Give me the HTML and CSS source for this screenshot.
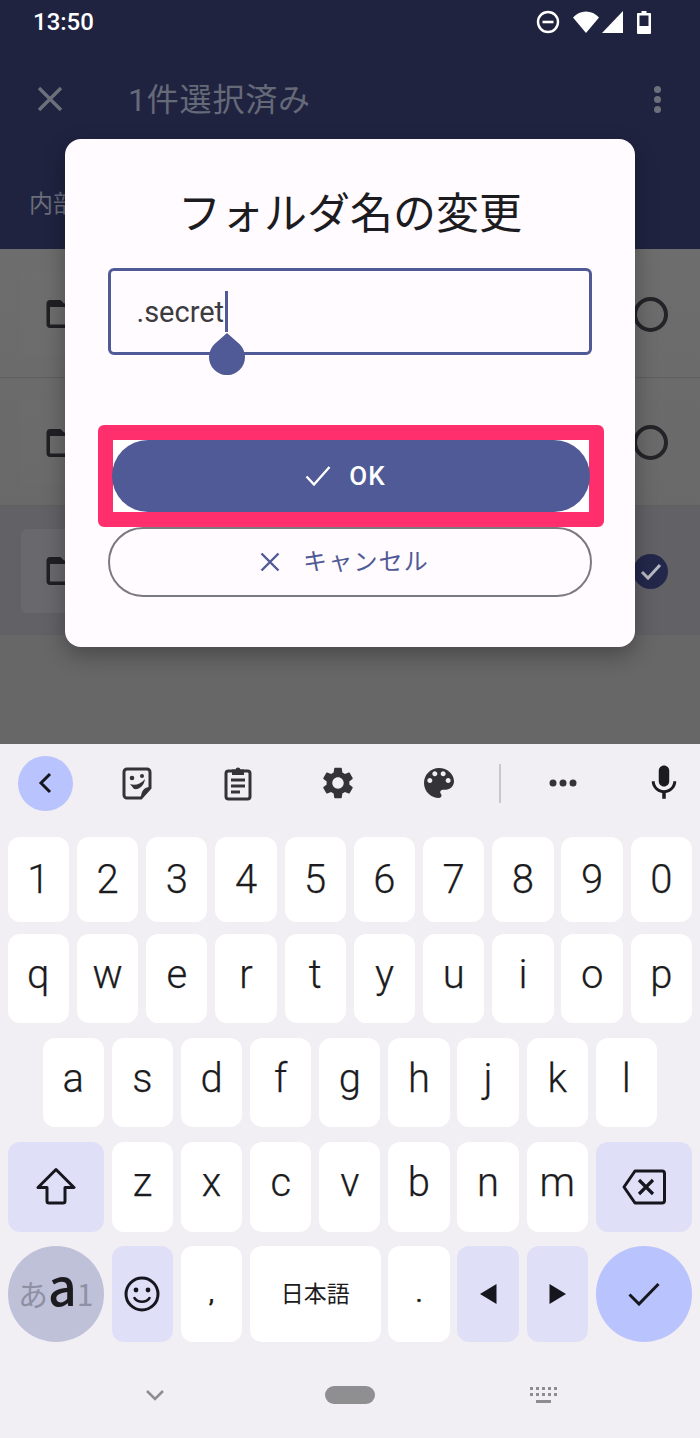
FILE: index.html
```html
<!DOCTYPE html>
<html lang="ja">
<head>
    <meta charset="UTF-8">
    <meta name="viewport" content="width=device-width, initial-scale=1.0">
    <title>フォルダ名の変更</title>
    <link rel="stylesheet" href="styles.css">
</head>
<body>
    <div class="screen">
        <div class="app">
            <header class="top">
                <div class="status">
                    <span class="time">13:50</span>
                    <div class="status-icons">
                        <svg width="24" height="24" viewBox="0 0 24 24"><circle cx="12" cy="12" r="10" fill="none" stroke="#fff" stroke-width="2.4"/><rect x="6.5" y="10.7" width="11" height="2.6" fill="#fff"/></svg>
                        <svg class="ic-wifi" width="26" height="22" viewBox="0 0 26 22"><path d="M0 6.5C3.5 2.5 8 .5 13 .5s9.500 2 13 6L13 22z" fill="#fff"/></svg>
                        <svg class="ic-signal" width="21" height="22" viewBox="0 0 21 22"><path d="M21 0v22H0z" fill="#fff"/></svg>
                        <svg class="ic-battery" width="14" height="23" viewBox="0 0 14 23"><path d="M4.500 0h5v2H13a1 1 0 0 1 1 1v19a1 1 0 0 1-1 1H1a1 1 0 0 1-1-1V3a1 1 0 0 1 1-1h3.500z" fill="#fff"/><rect x="2.500" y="4.500" width="9" height="10.500" fill="#1f2340"/></svg>
                    </div>
                </div>
                <div class="appbar">
                    <svg class="close" width="26" height="26" viewBox="0 0 26 26"><path d="M2 2l22 22M24 2L2 24" stroke="#6d6f7a" stroke-width="3.4" fill="none"/></svg>
                    <span class="appbar-title">1件選択済み</span>
                    <div class="more"><i></i><i></i><i></i></div>
                </div>
                <div class="tabs">内部</div>
            </header>

            <div class="list">
                <div class="row">
                    <div class="thumb"><svg width="42" height="42" viewBox="0 0 24 24"><path d="M20 6h-8l-2-2H4c-1.100 0-2 .9-2 2v12c0 1.100.9 2 2 2h16c1.100 0 2-.9 2-2V8c0-1.100-.9-2-2-2zm0 12H4V8h16v10z" fill="#1f1f24"/></svg></div>
                    <span class="radio"></span>
                </div>
                <div class="row">
                    <div class="thumb"><svg width="42" height="42" viewBox="0 0 24 24"><path d="M20 6h-8l-2-2H4c-1.100 0-2 .9-2 2v12c0 1.100.9 2 2 2h16c1.100 0 2-.9 2-2V8c0-1.100-.9-2-2-2zm0 12H4V8h16v10z" fill="#1f1f24"/></svg></div>
                    <span class="radio"></span>
                </div>
                <div class="row row-selected">
                    <div class="thumb"><svg width="42" height="42" viewBox="0 0 24 24"><path d="M20 6h-8l-2-2H4c-1.100 0-2 .9-2 2v12c0 1.100.9 2 2 2h16c1.100 0 2-.9 2-2V8c0-1.100-.9-2-2-2zm0 12H4V8h16v10z" fill="#1f1f24"/></svg></div>
                    <span class="radio radio-on"><svg width="24" height="24" viewBox="0 0 24 24"><path d="M3 13l6 6L21 6" stroke="#b8b8c2" stroke-width="3" fill="none"/></svg></span>
                </div>
            </div>

            <div class="dialog">
                <h2 class="dialog-title">フォルダ名の変更</h2>
                <div class="field">
                    <span class="field-text">.secret</span>
                    <span class="caret">
                        <svg class="handle" width="36" height="42" viewBox="0 0 36 42"><path d="M18 0L30.700 11.300A18 18 0 1 1 5.300 11.300z" fill="#4f5a96"/></svg>
                    </span>
                </div>
                <div class="highlight">
                    <button class="btn btn-ok">
                        <svg width="26" height="22" viewBox="0 0 26 22"><path d="M1.500 11.500l7.500 8L24.500 2" stroke="#fff" stroke-width="2.400" fill="none"/></svg>
                        <span>OK</span>
                    </button>
                </div>
                <button class="btn btn-cancel">
                    <svg width="20" height="20" viewBox="0 0 20 20"><path d="M1.500 1.500l17 17M18.500 1.500l-17 17" stroke="#4f5a96" stroke-width="2.400" fill="none"/></svg>
                    <span class="cancel-label">キャンセル</span>
                </button>
            </div>
        </div>

        <div class="keyboard">
            <div class="toolbar">
                <div class="tool-back"><svg width="18" height="24" viewBox="0 0 18 24"><path d="M13 3L4 12l9 9" stroke="#15161d" stroke-width="3" fill="none"/></svg></div>
                <div class="tool">
                    <svg width="34" height="34" viewBox="0 0 34 34"><path d="M7 3h20a3 3 0 0 1 3 3v16l-9 10H7a3 3 0 0 1-3-3V6a3 3 0 0 1 3-3z" fill="none" stroke="#333338" stroke-width="3"/><path d="M30 21c-6 0-9 4-9 11z" fill="#333338"/><circle cx="12" cy="12" r="2.300" fill="#333338"/><circle cx="22" cy="10" r="2" fill="#333338"/><path d="M10 18c5 2 11 0 15-5-1 7-6 11-11 10z" fill="#333338"/></svg>
                </div>
                <div class="tool">
                    <svg width="32" height="36" viewBox="0 0 32 36"><rect x="4" y="6" width="24" height="28" rx="2.500" fill="none" stroke="#333338" stroke-width="3"/><path d="M10 4.500h3.500a2.600 2.600 0 0 1 5 0H22V10H10z" fill="#333338"/><path d="M9 15h14M9 21h14M9 27h9" stroke="#333338" stroke-width="3"/></svg>
                </div>
                <div class="tool">
                    <svg width="38" height="38" viewBox="0 0 24 24"><path d="M19.140 12.940c.04-.3.06-.61.06-.94 0-.32-.02-.64-.07-.94l2.030-1.580c.18-.14.23-.41.12-.61l-1.920-3.320c-.12-.22-.37-.29-.59-.22l-2.390.96c-.5-.38-1.030-.7-1.620-.94l-.36-2.540c-.04-.24-.24-.41-.48-.41h-3.840c-.24 0-.43.17-.47.41l-.36 2.540c-.59.24-1.130.57-1.620.94l-2.390-.96c-.22-.08-.47 0-.59.22L2.740 8.870c-.12.21-.08.47.12.61l2.030 1.580c-.05.3-.09.63-.09.94s.02.64.07.94l-2.030 1.580c-.18.14-.23.41-.12.61l1.920 3.320c.12.22.37.29.59.22l2.390-.96c.5.38 1.030.7 1.620.94l.36 2.540c.05.24.24.41.48.41h3.840c.24 0 .44-.17.47-.41l.36-2.540c.59-.24 1.130-.56 1.620-.94l2.390.96c.22.08.47 0 .59-.22l1.920-3.320c.12-.22.07-.47-.12-.61l-2.010-1.580zM12 15.600c-1.980 0-3.600-1.620-3.600-3.600s1.620-3.600 3.600-3.600 3.600 1.620 3.600 3.600-1.620 3.600-3.600 3.600z" fill="#333338"/></svg>
                </div>
                <div class="tool">
                    <svg width="40" height="40" viewBox="0 0 24 24"><path d="M12 3c-4.970 0-9 4.030-9 9s4.030 9 9 9c.83 0 1.500-.67 1.500-1.500 0-.39-.15-.74-.39-1.010-.23-.26-.38-.61-.38-.99 0-.83.67-1.500 1.500-1.500H16c2.760 0 5-2.240 5-5 0-4.420-4.030-8-9-8zm-5.500 9c-.83 0-1.500-.67-1.500-1.500S5.670 9 6.500 9 8 9.670 8 10.500 7.330 12 6.500 12zm3-4C8.670 8 8 7.330 8 6.500S8.670 5 9.500 5s1.500.67 1.500 1.500S10.330 8 9.500 8zm5 0c-.83 0-1.500-.67-1.500-1.500S13.670 5 14.500 5s1.500.67 1.500 1.500S15.330 8 14.500 8zm3 4c-.83 0-1.500-.67-1.500-1.500S16.670 9 17.500 9s1.500.67 1.500 1.500-.67 1.500-1.500 1.500z" fill="#333338"/></svg>
                </div>
                <div class="tool-divider"></div>
                <div class="tool">
                    <svg width="28" height="8" viewBox="0 0 28 8"><circle cx="4" cy="4" r="3.500" fill="#333338"/><circle cx="14" cy="4" r="3.500" fill="#333338"/><circle cx="24" cy="4" r="3.500" fill="#333338"/></svg>
                </div>
                <div class="tool tool-mic">
                    <svg width="42" height="42" viewBox="0 0 24 24"><path d="M12 14c1.660 0 2.990-1.340 2.990-3L15 5c0-1.660-1.340-3-3-3S9 3.340 9 5v6c0 1.660 1.340 3 3 3zm5.300-3c0 3-2.540 5.100-5.300 5.100S6.700 14 6.700 11H5c0 3.410 2.720 6.230 6 6.720V21h2v-3.280c3.280-.48 6-3.300 6-6.720h-1.700z" fill="#1b1b20"/></svg>
                </div>
            </div>

            <div class="key-row row-1">
                <div class="key">1</div><div class="key">2</div><div class="key">3</div><div class="key">4</div><div class="key">5</div><div class="key">6</div><div class="key">7</div><div class="key">8</div><div class="key">9</div><div class="key">0</div>
            </div>
            <div class="key-row row-2 letters">
                <div class="key">q</div><div class="key">w</div><div class="key">e</div><div class="key">r</div><div class="key">t</div><div class="key">y</div><div class="key">u</div><div class="key">i</div><div class="key">o</div><div class="key">p</div>
            </div>
            <div class="key-row row-3 letters">
                <div class="key">a</div><div class="key">s</div><div class="key">d</div><div class="key">f</div><div class="key">g</div><div class="key">h</div><div class="key">j</div><div class="key">k</div><div class="key">l</div>
            </div>
            <div class="key-row row-4 letters">
                <div class="key key-wide key-fn">
                    <svg width="40" height="40" viewBox="0 0 40 40"><path d="M20 2.500L38 20.500H29V34a2 2 0 0 1-2 2H13a2 2 0 0 1-2-2V20.500H2z" fill="none" stroke="#16171e" stroke-width="3" stroke-linejoin="round"/></svg>
                </div>
                <div class="key">z</div><div class="key">x</div><div class="key">c</div><div class="key">v</div><div class="key">b</div><div class="key">n</div><div class="key">m</div>
                <div class="key key-wide key-fn">
                    <svg width="44" height="36" viewBox="0 0 44 36"><path d="M13 2h27a2.500 2.500 0 0 1 2.500 2.500v27A2.500 2.500 0 0 1 40 34H13L2 18z" fill="none" stroke="#16171e" stroke-width="3" stroke-linejoin="round"/><path d="M17 11l14 14M31 11L17 25" stroke="#16171e" stroke-width="3.200"/></svg>
                </div>
            </div>
            <div class="key-row row-5">
                <div class="key key-wide key-mode"><span class="mode-dim">あ</span><span class="mode-a">a</span><span class="mode-dim mode-one">1</span></div>
                <div class="key key-fn">
                    <svg width="36" height="36" viewBox="0 0 36 36"><circle cx="18" cy="18" r="16" fill="none" stroke="#16171e" stroke-width="3"/><circle cx="12" cy="14" r="2.400" fill="#16171e"/><circle cx="24" cy="14" r="2.400" fill="#16171e"/><path d="M10.500 22c3.500 5 11.500 5 15 0" fill="none" stroke="#16171e" stroke-width="2.600" stroke-linecap="round"/></svg>
                </div>
                <div class="key key-punct">,</div>
                <div class="key key-space">日本語</div>
                <div class="key key-punct">.</div>
                <div class="key key-fn"><svg width="17" height="20" viewBox="0 0 17 20"><path d="M16.500 0v20L0 10z" fill="#16171e"/></svg></div>
                <div class="key key-fn"><svg width="17" height="20" viewBox="0 0 17 20"><path d="M.5 0v20L17 10z" fill="#16171e"/></svg></div>
                <div class="key key-wide key-enter">
                    <svg width="32" height="24" viewBox="0 0 32 24"><path d="M1.500 12.500L11 22 30.500 2" fill="none" stroke="#16171e" stroke-width="3"/></svg>
                </div>
            </div>

            <div class="nav">
                <svg width="18" height="11" viewBox="0 0 18 11"><path d="M1 1l8 8 8-8" fill="none" stroke="#8d8d90" stroke-width="2.500"/></svg>
                <span class="nav-pill"></span>
                <svg width="28" height="16" viewBox="0 0 28 16"><path d="M0 1.500h28M0 7.500h28" stroke="#8d8d90" stroke-width="3" stroke-dasharray="3 3"/><rect x="6" y="13" width="15" height="3" fill="#8d8d90"/></svg>
            </div>
        </div>
    </div>
</body>
</html>
```

FILE: styles.css
```css
* {
    box-sizing: border-box;
}
body {
    margin: 0;
    font-family: Roboto, "Noto Sans CJK JP", sans-serif;
}
.screen {
    width: 700px;
    height: 1438px;
    overflow: hidden;
    display: flex;
    flex-direction: column;
}
.app {
    position: relative;
    height: 744px;
    background: linear-gradient(#717171, #676767 85%);
}

/* dimmed header */
.top {
    height: 249px;
    background-color: #1f2340;
}
.status {
    height: 44px;
    padding: 0 49px 0 33px;
    display: flex;
    align-items: center;
    justify-content: space-between;
}
.time {
    color: #fff;
    font-size: 24px;
    font-weight: 500;
}
.status-icons {
    display: flex;
    align-items: center;
}
.ic-wifi {
    margin-left: 13px;
}
.ic-signal {
    margin-left: 3px;
}
.ic-battery {
    margin-left: 14px;
}
.appbar {
    height: 110px;
    padding: 0 39px 0 37px;
    display: flex;
    align-items: center;
}
.appbar-title {
    margin: 0 0 4px 65px;
    color: #666a78;
    font-size: 32px;
    letter-spacing: 0.8px;
}
.more {
    margin-left: auto;
    display: flex;
    flex-direction: column;
    gap: 3px;
}
.more i {
    display: block;
    width: 7px;
    height: 7px;
    border-radius: 50%;
    background-color: #6d6f7a;
}
.tabs {
    height: 95px;
    padding: 0 0 0 29px;
    display: flex;
    align-items: center;
    color: #6a6d7b;
    font-size: 24px;
}

/* dimmed list */
.row {
    height: 128px;
    padding: 2px 32px 0 21px;
    display: flex;
    align-items: center;
    justify-content: space-between;
    border-bottom: 1px solid #5f5f5f;
}
.row:first-child,
.row-selected {
    height: 129px;
}
.row-selected {
    background-color: #616166;
}
.thumb {
    width: 90px;
    height: 84px;
    padding-left: 22px;
    display: flex;
    align-items: center;
    border-radius: 6px;
    background-color: rgba(255, 255, 255, 0.012);
}
.row-selected .thumb {
    background-color: #69686d;
}
.radio {
    width: 35px;
    height: 35px;
    display: flex;
    align-items: center;
    justify-content: center;
    border: 4px solid #232328;
    border-radius: 50%;
}
.radio-on {
    border: none;
    background-color: #23274a;
}

/* dialog */
.dialog {
    position: absolute;
    left: 65px;
    top: 139px;
    width: 570px;
    height: 508px;
    padding: 0 43px;
    background-color: #fffbff;
    border-radius: 16px;
    box-shadow: 0 8px 22px rgba(0, 0, 0, 0.3);
}
.dialog-title {
    height: 129px;
    margin: 0;
    padding-top: 13px;
    display: flex;
    align-items: center;
    justify-content: center;
    color: #1c1b1f;
    font-size: 43px;
    font-weight: 400;
}
.field {
    height: 87px;
    padding-left: 25.5px;
    display: flex;
    align-items: center;
    border: 3.5px solid #4f5a96;
    border-radius: 6px;
}
.field-text {
    color: #3b3b40;
    font-size: 29px;
}
.caret {
    position: relative;
    width: 3px;
    height: 41px;
    margin-left: 1px;
    background-color: #4f5a96;
}
.handle {
    position: absolute;
    left: -16.5px;
    top: 42px;
}
.highlight {
    margin: 70px -12px 0 -10px;
    height: 102px;
    border: 15px solid #ff2e6d;
    border-radius: 6px;
    background-color: #fff;
}
.btn {
    display: flex;
    align-items: center;
    justify-content: center;
    padding: 0 11px 0 0;
    font-family: inherit;
    border-radius: 36px;
}
.btn-ok {
    width: calc(100% + 2px);
    height: 72px;
    margin-left: -1px;
    gap: 18px;
    border: none;
    background-color: #4f5a96;
    color: #fff;
    font-size: 26px;
    font-weight: 500;
    letter-spacing: 1px;
}
.btn-cancel {
    width: 100%;
    height: 70px;
    gap: 23px;
    border: 2px solid #7a797f;
    background-color: transparent;
    color: #4f5a96;
    font-size: 24px;
    letter-spacing: 1.2px;
}
.cancel-label {
    margin-bottom: 5px;
}

/* keyboard */
.keyboard {
    flex: 1;
    background-color: #f1eff3;
}
.toolbar {
    height: 78px;
    margin-bottom: 15px;
    display: flex;
    align-items: center;
}
.tool-back {
    width: 55px;
    height: 55px;
    margin: 0 14px 0 18px;
    display: flex;
    align-items: center;
    justify-content: center;
    border-radius: 50%;
    background-color: #b9c3fd;
}
.tool {
    width: 100.500px;
    display: flex;
    justify-content: center;
}
.tool-divider {
    width: 2px;
    height: 39px;
    margin: 0 12px 0 10px;
    background-color: #c9c8cc;
}
.tool-mic {
    width: 50px;
    margin-left: 25px;
}
.key-row {
    display: flex;
    gap: 7.9px;
    padding: 0 8px 0 7.6px;
}
.row-1 {
    height: 85px;
    margin-bottom: 12px;
}
.row-2 {
    height: 89px;
    margin-bottom: 15px;
}
.row-3 {
    height: 89px;
    margin-bottom: 15px;
    padding: 0 43px 0 42.6px;
}
.row-4 {
    height: 90px;
    margin-bottom: 14px;
}
.row-5 {
    height: 96px;
}
.key {
    flex: 1;
    display: flex;
    align-items: center;
    justify-content: center;
    border-radius: 12px;
    background-color: #fff;
    color: #1b1b20;
    font-size: 40px;
    font-weight: 300;
    -webkit-text-stroke: 0.25px #1b1b20;
}
.letters .key {
    padding-bottom: 9px;
}
.letters .key-fn {
    padding-bottom: 0;
}
.key-wide {
    flex: 0 0 96.400px;
}
.key-fn {
    background-color: #dfe0f7;
}
.key-punct {
    padding-bottom: 0;
    font-size: 24px;
    font-weight: 500;
}
.key-space {
    flex: 0 0 130.500px;
    padding-bottom: 4px;
    font-size: 23px;
    font-weight: 400;
    font-family: "Noto Sans CJK JP", sans-serif;
    -webkit-text-stroke: 0;
}
.key-mode {
    align-items: baseline;
    padding-top: 13px;
    border-radius: 50%;
    background-color: #bfc1d9;
    font-family: "Noto Sans CJK JP", sans-serif;
    font-weight: 400;
    line-height: 1;
    -webkit-text-stroke: 0;
}
.mode-dim {
    color: #8f90a4;
    font-size: 30px;
}
.mode-a {
    font-size: 50px;
    font-weight: 500;
}
.key-enter {
    border-radius: 50%;
    background-color: #b9c3fd;
}
.nav {
    height: 96px;
    padding: 10px 142px 0 146px;
    display: flex;
    align-items: center;
    justify-content: space-between;
}
.nav-pill {
    width: 50px;
    height: 18px;
    margin-left: 6px;
    border-radius: 9px;
    background-color: #8f8f91;
}
```
